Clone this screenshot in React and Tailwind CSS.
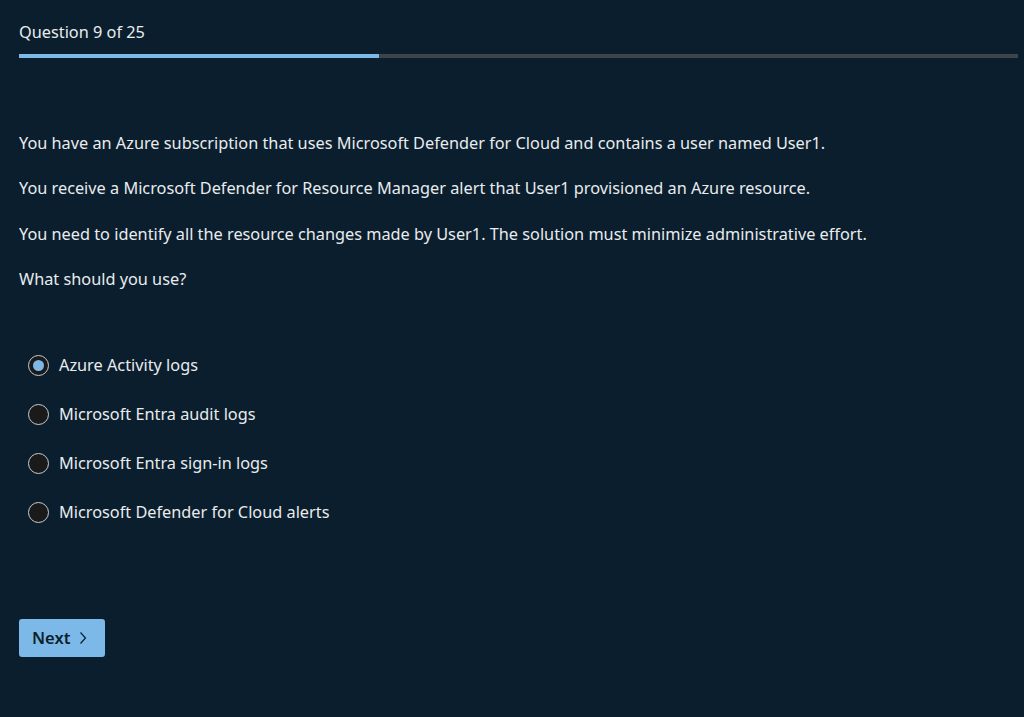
import { useState } from 'react';

const options = [
    'Azure Activity logs',
    'Microsoft Entra audit logs',
    'Microsoft Entra sign-in logs',
    'Microsoft Defender for Cloud alerts',
];

const paragraphs = [
    'You have an Azure subscription that uses Microsoft Defender for Cloud and contains a user named User1.',
    'You receive a Microsoft Defender for Resource Manager alert that User1 provisioned an Azure resource.',
    'You need to identify all the resource changes made by User1. The solution must minimize administrative effort.',
    'What should you use?',
];

export default function App() {
    const [selected, setSelected] = useState(0);
    const current = 9;
    const total = 25;

    return (
        <div className="min-h-[717px] bg-[#0b1e2d] text-[#e8ecef] px-[19px] pt-[22px] font-['Noto_Sans',sans-serif]">
            <div className="text-[16.3px] leading-[20px]">
                Question {current} of {total}
            </div>
            <div className="mt-[12px] h-[4px] w-[999px] bg-[#3d4347]">
                <div className="h-full bg-[#7cb9e8]" style={{ width: `${(current / total) * 100}%` }} />
            </div>

            <div className="mt-[74px] flex flex-col gap-[23.4px] text-[16.3px] leading-[22px]">
                {paragraphs.map((p) => (
                    <p key={p}>{p}</p>
                ))}
            </div>

            <div className="mt-[64px] flex flex-col gap-[27px] pl-[9px]">
                {options.map((opt, i) => (
                    <label key={opt} className="flex items-center gap-[10px] text-[16.3px] leading-[22px] cursor-pointer">
                        <span
                            onClick={() => setSelected(i)}
                            className="flex h-[21px] w-[21px] items-center justify-center rounded-full border border-[#c8ccd0] bg-[#1a1a1a]"
                        >
                            {selected === i && <span className="h-[11px] w-[11px] rounded-full bg-[#7cb9e8]" />}
                        </span>
                        {opt}
                    </label>
                ))}
            </div>

            <button className="mt-[96px] flex h-[38px] w-[86px] items-center gap-[9px] rounded-[3px] bg-[#7cb9e8] pl-[13px] text-[16.5px] font-semibold text-[#0b1e2d]">
                Next
                <svg width="8" height="14" viewBox="0 0 8 14" fill="none" stroke="#0b1e2d" strokeWidth="1.2">
                    <path d="M1.5 1.5 L6.5 7 L1.5 12.5" />
                </svg>
            </button>
        </div>
    );
}
